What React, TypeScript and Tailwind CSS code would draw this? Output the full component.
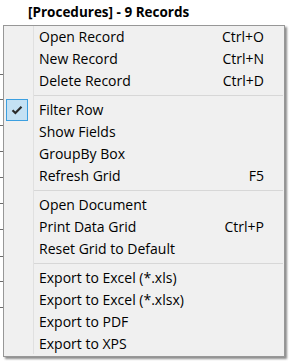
import { Fragment } from 'react';

type Item = { label: string; shortcut?: string; checked?: boolean };

const GROUPS: Item[][] = [
  [
    { label: 'Open Record', shortcut: 'Ctrl+O' },
    { label: 'New Record', shortcut: 'Ctrl+N' },
    { label: 'Delete Record', shortcut: 'Ctrl+D' },
  ],
  [
    { label: 'Filter Row', checked: true },
    { label: 'Show Fields' },
    { label: 'GroupBy Box' },
    { label: 'Refresh Grid', shortcut: 'F5' },
  ],
  [
    { label: 'Open Document' },
    { label: 'Print Data Grid', shortcut: 'Ctrl+P' },
    { label: 'Reset Grid to Default' },
  ],
  [
    { label: 'Export to Excel (*.xls)' },
    { label: 'Export to Excel (*.xlsx)' },
    { label: 'Export to PDF' },
    { label: 'Export to XPS' },
  ],
];

// y positions of the grid row lines peeking out left of the menu
const GRID_LINES = [74, 99, 125, 151, 177, 203, 229, 256, 281, 307];

function Check() {
  return (
    <svg width="12" height="10" viewBox="0 0 12 10" aria-hidden>
      <path d="M1.5 5.2 4.4 8 10.5 1.8" fill="none" stroke="#2b2b2b" strokeWidth="2.2" />
    </svg>
  );
}

function MenuRow({ item }: { item: Item }) {
  return (
    <div className="relative flex h-[22px] items-center pl-[35px] pr-[20px]">
      {item.checked ? (
        <div className="absolute left-[2px] top-0 flex h-[22px] w-[22px] items-center justify-center border border-[#3c9fe0] bg-[#c4e1f4]">
          <Check />
        </div>
      ) : null}
      <span className="flex-1">{item.label}</span>
      {item.shortcut ? <span>{item.shortcut}</span> : null}
    </div>
  );
}

export default function App() {
  return (
    <div
      className="relative h-[361px] w-[289px] overflow-hidden bg-white text-black"
      style={{ fontFamily: '"Open Sans", "Noto Sans", sans-serif' }}
    >
      {GRID_LINES.map((y) => (
        <div key={y} className="absolute left-0 h-px w-[4px] bg-[#6b6b6b]" style={{ top: y }} />
      ))}

      <div className="flex h-[25px] items-center pl-[28px] text-[13.5px] font-bold">
        [Procedures] - 9 Records
      </div>

      <div className="relative ml-[3px] w-[282px] border border-[#979797] bg-[#f0f0f0] pb-[1px] text-[14px] leading-none shadow-[2px_2px_2px_rgba(0,0,0,0.45)]">
        <div className="absolute bottom-[2px] left-[29px] top-0 w-px bg-[#e0e0e0]" />
        {GROUPS.map((group, gi) => (
          <Fragment key={gi}>
            {gi > 0 ? (
              <div className="py-[3px] pl-[30px] pr-[1px]">
                <div className="h-px bg-[#d7d7d7]" />
              </div>
            ) : null}
            {group.map((item) => (
              <MenuRow key={item.label} item={item} />
            ))}
          </Fragment>
        ))}
      </div>
    </div>
  );
}
